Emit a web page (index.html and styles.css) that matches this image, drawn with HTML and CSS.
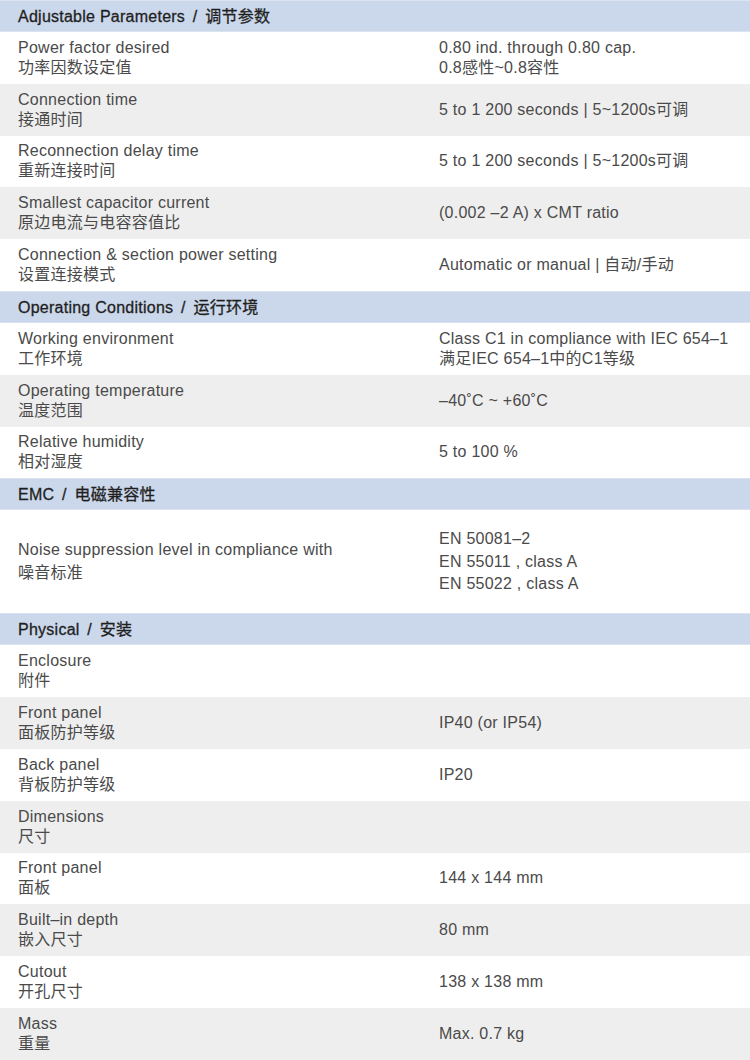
FILE: index.html
```html
<!DOCTYPE html>
<html lang="zh-CN">
<head>
<meta charset="utf-8">
<title>Specifications</title>
<link rel="stylesheet" href="styles.css">
</head>
<body>
<div class="spec">
  <div class="head">Adjustable Parameters <span class="sl">/</span> 调节参数</div>
  <div class="row">
    <div class="k">Power factor desired<br>功率因数设定值</div>
    <div class="v">0.80 ind. through 0.80 cap.<br>0.8感性~0.8容性</div>
  </div>
  <div class="row alt">
    <div class="k">Connection time<br>接通时间</div>
    <div class="v">5 to 1 200 seconds | 5~1200s可调</div>
  </div>
  <div class="row">
    <div class="k">Reconnection delay time<br>重新连接时间</div>
    <div class="v">5 to 1 200 seconds | 5~1200s可调</div>
  </div>
  <div class="row alt">
    <div class="k">Smallest capacitor current<br>原边电流与电容容值比</div>
    <div class="v">(0.002 –2 A) x CMT ratio</div>
  </div>
  <div class="row">
    <div class="k">Connection &amp; section power setting<br>设置连接模式</div>
    <div class="v">Automatic or manual | 自动/手动</div>
  </div>

  <div class="head">Operating Conditions <span class="sl">/</span> 运行环境</div>
  <div class="row">
    <div class="k">Working environment<br>工作环境</div>
    <div class="v">Class C1 in compliance with IEC 654–1<br>满足IEC 654–1中的C1等级</div>
  </div>
  <div class="row alt">
    <div class="k">Operating temperature<br>温度范围</div>
    <div class="v">–40˚C ~ +60˚C</div>
  </div>
  <div class="row">
    <div class="k">Relative humidity<br>相对湿度</div>
    <div class="v">5 to 100 %</div>
  </div>

  <div class="head">EMC <span class="sl">/</span> 电磁兼容性</div>
  <div class="row tall">
    <div class="k">Noise suppression level in compliance with<br>噪音标准</div>
    <div class="v">EN 50081–2<br>EN 55011 , class A<br>EN 55022 , class A</div>
  </div>

  <div class="head">Physical <span class="sl">/</span> 安装</div>
  <div class="row">
    <div class="k">Enclosure<br>附件</div>
    <div class="v"></div>
  </div>
  <div class="row alt">
    <div class="k">Front panel<br>面板防护等级</div>
    <div class="v">IP40 (or IP54)</div>
  </div>
  <div class="row">
    <div class="k">Back panel<br>背板防护等级</div>
    <div class="v">IP20</div>
  </div>
  <div class="row alt">
    <div class="k">Dimensions<br>尺寸</div>
    <div class="v"></div>
  </div>
  <div class="row">
    <div class="k">Front panel<br>面板</div>
    <div class="v">144 x 144 mm</div>
  </div>
  <div class="row alt">
    <div class="k">Built–in depth<br>嵌入尺寸</div>
    <div class="v">80 mm</div>
  </div>
  <div class="row">
    <div class="k">Cutout<br>开孔尺寸</div>
    <div class="v">138 x 138 mm</div>
  </div>
  <div class="row alt">
    <div class="k">Mass<br>重量</div>
    <div class="v">Max. 0.7 kg</div>
  </div>
</div>
</body>
</html>
```

FILE: styles.css
```css
html, body {
  margin: 0;
  padding: 0;
  background: #ffffff;
}

.spec {
  width: 750px;
  font-family: "Liberation Sans", "Noto Sans CJK SC", sans-serif;
  font-size: 16px;
  letter-spacing: 0.25px;
  color: #4a4a4a;
}

.head {
  height: 32px;
  box-sizing: border-box;
  line-height: 31px;
  padding-left: 18px;
  background: #cbd7ea;
  border-top: 1px solid #dbe3f1;
  border-bottom: 1px solid #dbe3f1;
  color: #1f1f1f;
  -webkit-text-stroke: 0.3px #1f1f1f;
  white-space: nowrap;
}

.sl {
  margin: 0 3px;
}

.row {
  height: 51.8px;
  display: grid;
  grid-template-columns: 439px 1fr;
  align-items: center;
  background: #ffffff;
  line-height: 20px;
}

.row.alt {
  background: #eeeeee;
}

.row.tall {
  height: 103px;
  line-height: 22.5px;
}

.k {
  padding-left: 18px;
}

.v {
  padding-right: 8px;
  white-space: nowrap;
}
```
